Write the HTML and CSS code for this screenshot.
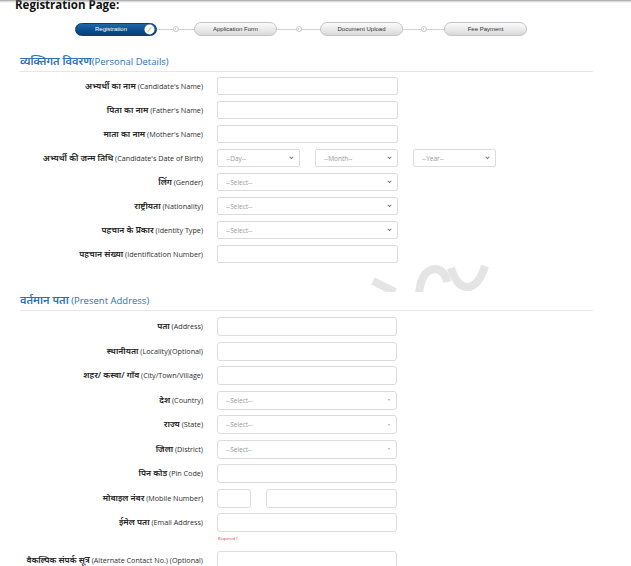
FILE: index.html
```html
<!DOCTYPE html>
<html lang="hi">
<head>
<meta charset="utf-8">
<title>Registration Page</title>
<link rel="stylesheet" href="styles.css">
</head>
<body>
<div class="page">
  <div class="top-shade"></div>
  <h1 class="title">Registration Page:</h1>

  <div class="stepper">
    <div class="pill pill-active">
      <span class="pill-text">Registration</span>
      <svg class="pill-check" viewBox="0 0 11 11" width="11" height="11">
        <circle cx="5.5" cy="5.5" r="5" fill="#ffffff"/>
        <line x1="3.6" y1="7.8" x2="7.4" y2="3.2" stroke="#c9d66a" stroke-width="1.2"/>
      </svg>
    </div>
    <div class="conn conn-1"><span class="dot"></span></div>
    <div class="pill">Application Form</div>
    <div class="conn conn-2"><span class="dot"></span></div>
    <div class="pill">Document Upload</div>
    <div class="conn conn-3"><span class="dot"></span></div>
    <div class="pill">Fee Payment</div>
  </div>

  <section class="section section-personal">
    <h2 class="section-title"><span class="hi">व्यक्तिगत विवरण</span>(Personal Details)</h2>
    <div class="form form-personal">
      <label class="lbl"><span class="hi">अभ्यर्थी का नाम</span> (Candidate's Name)</label>
      <div class="field"><span class="input"></span></div>

      <label class="lbl"><span class="hi">पिता का नाम</span> (Father's Name)</label>
      <div class="field"><span class="input"></span></div>

      <label class="lbl"><span class="hi">माता का नाम</span> (Mother's Name)</label>
      <div class="field"><span class="input"></span></div>

      <label class="lbl"><span class="hi">अभ्यर्थी की जन्म तिथि</span> (Candidate's Date of Birth)</label>
      <div class="field dob">
        <span class="select sel-small"><span>--Day--</span><i class="chev"></i></span>
        <span class="select sel-small"><span>--Month--</span><i class="chev"></i></span>
        <span class="select sel-small"><span>--Year--</span><i class="chev"></i></span>
      </div>

      <label class="lbl"><span class="hi">लिंग</span> (Gender)</label>
      <div class="field"><span class="select"><span>--Select--</span><i class="chev"></i></span></div>

      <label class="lbl"><span class="hi">राष्ट्रीयता</span> (Nationality)</label>
      <div class="field"><span class="select"><span>--Select--</span><i class="chev"></i></span></div>

      <label class="lbl"><span class="hi">पहचान के प्रकार</span> (Identity Type)</label>
      <div class="field"><span class="select"><span>--Select--</span><i class="chev"></i></span></div>

      <label class="lbl"><span class="hi">पहचान संख्या</span> (Identification Number)</label>
      <div class="field"><span class="input"></span></div>
    </div>
  </section>

  <svg class="watermark" viewBox="0 0 130 40" width="130" height="40">
    <g fill="none" stroke="#e4e4e4" stroke-width="8" stroke-linecap="butt">
      <line x1="10" y1="21" x2="32" y2="32"/>
      <path d="M56 34 Q58 10 72 9 Q82 10 84 22"/>
      <path d="M88 8 Q94 28 106 27 Q116 25 122 6"/>
    </g>
  </svg>

  <section class="section section-address">
    <h2 class="section-title"><span class="hi">वर्तमान पता</span> (Present Address)</h2>
    <div class="form form-address">
      <label class="lbl"><span class="hi">पता</span> (Address)</label>
      <div class="field"><span class="input"></span></div>

      <label class="lbl"><span class="hi">स्थानीयता</span> (Locality)(Optional)</label>
      <div class="field"><span class="input"></span></div>

      <label class="lbl"><span class="hi">शहर/ कस्बा/ गाँव</span> (City/Town/Village)</label>
      <div class="field"><span class="input"></span></div>

      <label class="lbl"><span class="hi">देश</span> (Country)</label>
      <div class="field"><span class="select"><span>--Select--</span><i class="tri"></i></span></div>

      <label class="lbl"><span class="hi">राज्य</span> (State)</label>
      <div class="field"><span class="select"><span>--Select--</span><i class="tri"></i></span></div>

      <label class="lbl"><span class="hi">जिला</span> (District)</label>
      <div class="field"><span class="select"><span>--Select--</span><i class="tri"></i></span></div>

      <label class="lbl"><span class="hi">पिन कोड</span> (Pin Code)</label>
      <div class="field"><span class="input"></span></div>

      <label class="lbl"><span class="hi">मोबाइल नंबर</span> (Mobile Number)</label>
      <div class="field mobile"><span class="input code"></span><span class="input num"></span></div>

      <label class="lbl"><span class="hi">ईमेल पता</span> (Email Address)</label>
      <div class="field email">
        <span class="input"></span>
        <span class="required">Required ?</span>
      </div>

      <label class="lbl"><span class="hi">वैकल्पिक संपर्क सूत्र</span> (Alternate Contact No.) (Optional)</label>
      <div class="field"><span class="input"></span></div>
    </div>
  </section>
</div>
</body>
</html>
```

FILE: styles.css
```css
html, body {
  margin: 0;
  padding: 0;
  background: #ffffff;
}

body {
  font-family: "Open Sans", "Noto Sans", "Noto Sans Devanagari", "Lohit Devanagari", sans-serif;
  color: #222;
  width: 631px;
  height: 566px;
  overflow: hidden;
}

.page {
  position: relative;
}

.top-shade {
  position: absolute;
  left: 0;
  top: 0;
  width: 631px;
  height: 4px;
  background: linear-gradient(#5a5a5a, rgba(120,120,120,0.35) 50%, rgba(255,255,255,0));
}

.title {
  margin: -1px 0 0 15px;
  font-size: 11.5px;
  line-height: 12px;
  font-weight: 700;
  color: #111;
}

/* stepper */
.stepper {
  display: flex;
  align-items: center;
  margin-top: 11px;
  padding-left: 75px;
  height: 14px;
}

.pill {
  width: 83px;
  height: 14px;
  box-sizing: border-box;
  border: 1px solid #c4c4c4;
  border-radius: 7px;
  background: linear-gradient(#fbfbfb, #e9e9e9 55%, #d9d9d9);
  font-family: "Liberation Sans", Arial, sans-serif;
  font-size: 6px;
  line-height: 12px;
  text-align: center;
  color: #333;
  flex: none;
}

.pill-active {
  width: 82px;
  height: 13px;
  border-color: #0a3f73;
  background: linear-gradient(#1f66a8, #0b4d8c 60%, #083f76);
  color: #ffffff;
  display: flex;
  align-items: center;
  justify-content: space-between;
  padding: 0 1px 0 19px;
}

.pill-active .pill-text {
  line-height: 11px;
}

.pill-check {
  display: block;
  flex: none;
}

.conn {
  position: relative;
  height: 14px;
  flex: none;
  display: flex;
  align-items: center;
  justify-content: center;
}

.conn::before {
  content: "";
  position: absolute;
  left: 0;
  right: 0;
  top: 7px;
  border-top: 1px solid #d2d2d2;
}

.conn-1 { width: 37px; }
.conn-2 { width: 43px; }
.conn-3 { width: 41px; }

.dot {
  position: relative;
  width: 6px;
  height: 6px;
  box-sizing: border-box;
  border: 1px solid #c8c8c8;
  border-radius: 50%;
  background: #fff;
}

.dot::after {
  content: "";
  position: absolute;
  left: 1.5px;
  top: 0.5px;
  width: 1px;
  height: 2.5px;
  background: #cfcfcf;
}

/* sections */
.section-title {
  margin: 0 38px 0 20px;
  font-size: 9.5px;
  line-height: 13px;
  font-weight: 400;
  color: #2d6fb7;
  border-bottom: 1px solid #e6e6e6;
  padding-bottom: 3px;
}

.section-title .hi {
  font-size: 11px;
  line-height: 1;
  font-weight: 600;
}

.section-personal {
  margin-top: 19px;
}

.section-address {
  margin-top: 31px;
}

.form {
  display: grid;
  grid-template-columns: 203px 1fr;
  column-gap: 14px;
  align-items: start;
}

.form-personal {
  margin-top: 5px;
  row-gap: 6px;
}

.form-address {
  margin-top: 6px;
  row-gap: 5.5px;
}

.lbl {
  font-size: 7.2px;
  line-height: 18px;
  height: 18px;
  text-align: right;
  color: #2e2e2e;
  white-space: nowrap;
}

.lbl .hi {
  font-size: 8.5px;
  line-height: 1;
  font-weight: 600;
  color: #222;
}

.form-address .lbl {
  line-height: 19px;
  height: 19px;
}

.field {
  display: flex;
  align-items: center;
  gap: 15px;
}

.input, .select {
  display: flex;
  align-items: center;
  width: 181px;
  height: 18px;
  box-sizing: border-box;
  border: 1px solid #dcdcdc;
  border-radius: 2px;
  background: #fff;
}

.form-address .input,
.form-address .select {
  width: 180px;
  height: 19px;
  border-radius: 3px;
}

.select {
  justify-content: space-between;
  padding: 0 6px 0 8px;
  font-size: 6.5px;
  color: #999;
}

.sel-small {
  width: 83px;
}

.chev {
  width: 2px;
  height: 2px;
  border-right: 1.1px solid #777;
  border-bottom: 1.1px solid #777;
  transform: rotate(45deg) translate(-1px, -1px);
}

.tri {
  width: 0;
  height: 0;
  border-left: 1.5px solid transparent;
  border-right: 1.5px solid transparent;
  border-top: 2px solid #aaa;
}

.mobile .code {
  width: 34px;
}

.mobile .num {
  width: 131px;
}

.email {
  flex-direction: column;
  align-items: flex-start;
  gap: 0;
}

.required {
  font-size: 4px;
  line-height: 13px;
  color: #e0333a;
  padding-left: 1px;
}

.watermark {
  position: absolute;
  left: 363px;
  top: 261px;
  pointer-events: none;
  clip-path: inset(0 0 8px 0);
}
```
